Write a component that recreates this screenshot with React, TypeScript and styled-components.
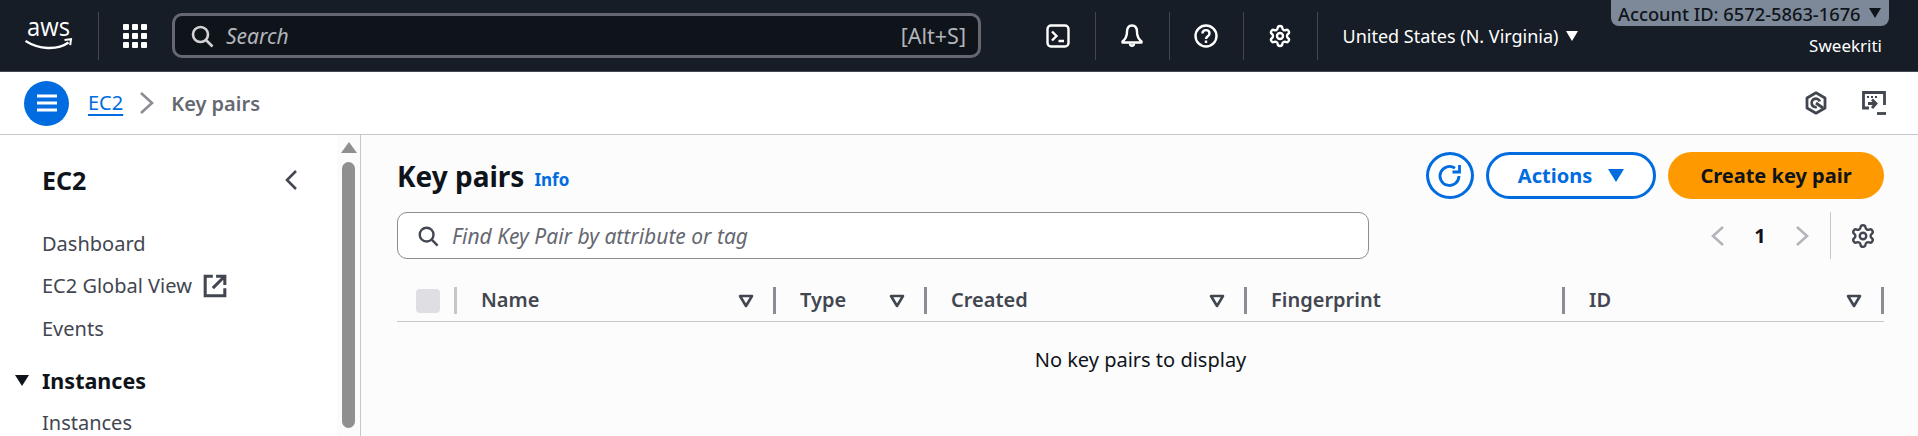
import React from "react";
import styled, { createGlobalStyle } from "styled-components";
import { Settings } from "lucide-react";

const GlobalStyle = createGlobalStyle`
    html, body { margin: 0; padding: 0; background: #fff; }
    body { font-family: "Noto Sans", "Open Sans", sans-serif; width: 1918px; height: 436px; overflow: hidden; }
    * { box-sizing: border-box; }
`

const Page = styled.div`
    width: 1918px;
    height: 436px;
    display: flex;
    flex-direction: column;
    overflow: hidden;
`

const TopBar = styled.header`
    height: 72px;
    flex: none;
    display: flex;
    align-items: center;
    padding-left: 25px;
    background: #161d26;
    border-bottom: 1px solid #424650;
    color: #fff;
`

const Logo = styled.svg`
    width: 48px;
    height: 60px;
    flex: none;
`

const TopDivider = styled.span`
    width: 1px;
    height: 48px;
    flex: none;
    background: #424650;
`

const LogoDivider = styled(TopDivider)`
    margin: 0 24px 0 25px;
`

const TopIcon = styled.svg`
    width: 24px;
    height: 24px;
    flex: none;
    color: #fff;
    display: block;
`

const TopGear = styled(Settings)`
    width: 24px;
    height: 24px;
    flex: none;
    color: #fff;
    display: block;
`

const SearchBox = styled.div`
    width: 809px;
    height: 45px;
    margin-left: 25px;
    flex: none;
    display: flex;
    align-items: center;
    padding: 0 12px 0 15px;
    background: #0f141a;
    border: 3px solid #656871;
    border-radius: 10px;
    color: #b4b4bb;
    font-size: 21px;
`

const SearchHint = styled.span`
    margin-left: 12px;
    font-style: italic;
    flex: 1;
`

const ShortcutHint = styled.span`
    font-size: 21.5px;
`

const IconGroup = styled.div`
    margin-left: 65px;
    display: flex;
    align-items: center;
    gap: 24.5px;
`

const Region = styled.div`
    margin-left: 25px;
    display: flex;
    align-items: center;
    gap: 7px;
    font-size: 18px;
    color: #fff;
`

const Caret = styled.span<{ $size: number; $color: string }>`
    display: inline-block;
    flex: none;
    width: 0;
    height: 0;
    border-left: ${(p) => p.$size}px solid transparent;
    border-right: ${(p) => p.$size}px solid transparent;
    border-top: ${(p) => Math.round(p.$size * 1.6)}px solid ${(p) => p.$color};
`

const AccountColumn = styled.div`
    margin-left: auto;
    margin-right: 29px;
    align-self: flex-start;
    display: flex;
    flex-direction: column;
    align-items: flex-end;
`

const AccountBadge = styled.div`
    width: 278px;
    height: 26px;
    display: flex;
    align-items: center;
    justify-content: space-between;
    padding: 0 8px 0 7px;
    background: #7d8998;
    border-radius: 0 0 8px 8px;
    color: #0f141a;
    font-size: 18.3px;
    font-weight: 500;
    white-space: nowrap;
`

const UserName = styled.div`
    margin: 9px 7px 0 0;
    font-size: 17px;
    line-height: 22px;
    color: #fff;
`

const CrumbBar = styled.div`
    height: 63px;
    flex: none;
    display: flex;
    align-items: center;
    padding: 0 32px 0 24px;
    background: #fff;
    border-bottom: 1px solid #c6c6cd;
`

const MenuButton = styled.button`
    width: 45px;
    height: 45px;
    padding: 0;
    flex: none;
    display: flex;
    align-items: center;
    justify-content: center;
    border: 0;
    border-radius: 50%;
    background: #006ce0;
`

const CrumbLink = styled.a`
    margin-left: 19px;
    font-size: 20px;
    line-height: 24px;
    color: #006ce0;
    text-decoration: underline;
    text-decoration-thickness: 2px;
    text-underline-offset: 4px;
`

const CrumbChevron = styled.svg`
    width: 24px;
    height: 24px;
    margin: 0 13px 0 11px;
    flex: none;
    color: #8c8c94;
`

const CrumbCurrent = styled.span`
    font-size: 20px;
    font-weight: 600;
    color: #656871;
`

const CrumbTools = styled.div`
    margin-left: auto;
    display: flex;
    align-items: center;
    gap: 34px;
    color: #424650;
`

const Body = styled.div`
    flex: 1;
    min-height: 0;
    display: flex;
`

const Sidebar = styled.aside`
    width: 361px;
    flex: none;
    display: flex;
    background: #fff;
    border-right: 1px solid #c6c6cd;
    overflow: hidden;
`

const SideContent = styled.nav`
    width: 337px;
    flex: none;
    padding: 30px 39px 0 15px;
`

const SideTitleRow = styled.div`
    display: flex;
    align-items: center;
    justify-content: space-between;
    height: 30px;
    margin-left: 27px;
`

const SideTitle = styled.div`
    font-size: 25px;
    font-weight: 700;
    color: #0f141a;
`

const SideItem = styled.a`
    display: flex;
    align-items: center;
    gap: 11px;
    margin-left: 27px;
    height: 42.5px;
    font-size: 20px;
    color: #424650;
`

const SideItems = styled.div`
    margin-top: 27px;
`

const SideSection = styled.div`
    margin-top: 10px;
    height: 42px;
    display: flex;
    align-items: center;
    gap: 13px;
    font-size: 21.5px;
    font-weight: 700;
    color: #0f141a;
`

const ScrollTrack = styled.div`
    width: 23px;
    flex: none;
    display: flex;
    flex-direction: column;
    align-items: center;
    padding: 7px 0 0 0;
    background: #fbfbfb;
`

const ScrollUp = styled.span`
    width: 0;
    height: 0;
    border-left: 8px solid transparent;
    border-right: 8px solid transparent;
    border-bottom: 11px solid #8f8f8f;
`

const ScrollThumb = styled.div`
    width: 13px;
    height: 266px;
    margin-top: 9px;
    border-radius: 7px;
    background: #8f8f8f;
`

const Main = styled.main`
    flex: 1;
    min-width: 0;
    padding: 17px 34px 0 36px;
    background: #fcfcfc;
`

const HeadRow = styled.div`
    display: flex;
    align-items: center;
    height: 47px;
`

const PageTitle = styled.h1`
    margin: 0;
    font-size: 28px;
    font-weight: 700;
    color: #0f141a;
`

const InfoLink = styled.a`
    margin: 7px 0 0 10px;
    font-size: 17px;
    font-weight: 700;
    color: #006ce0;
`

const Actions = styled.div`
    margin-left: auto;
    display: flex;
    align-items: center;
    gap: 12px;
`

const RefreshButton = styled.button`
    width: 48px;
    height: 47px;
    padding: 0;
    display: flex;
    align-items: center;
    justify-content: center;
    background: #fff;
    border: 3px solid #006ce0;
    border-radius: 50%;
    color: #006ce0;
`

const PillButton = styled.button<{ $primary?: boolean; $width: number }>`
    width: ${(p) => p.$width}px;
    height: 47px;
    padding: 0;
    display: flex;
    align-items: center;
    justify-content: center;
    gap: 16px;
    font-family: inherit;
    font-size: 20px;
    font-weight: 700;
    border-radius: 24px;
    background: ${(p) => (p.$primary ? "#ff9900" : "#fff")};
    border: ${(p) => (p.$primary ? "0" : "3px solid #006ce0")};
    color: ${(p) => (p.$primary ? "#0f141a" : "#006ce0")};
`

const FilterRow = styled.div`
    display: flex;
    align-items: center;
    margin-top: 13px;
    height: 47px;
`

const FilterBox = styled.div`
    width: 972px;
    height: 47px;
    display: flex;
    align-items: center;
    gap: 13px;
    padding-left: 19px;
    background: #fff;
    border: 1px solid #8c8c94;
    border-radius: 10px;
    font-size: 21px;
    font-style: italic;
    color: #656871;
`

const Pager = styled.div`
    margin-left: auto;
    display: flex;
    align-items: center;
    height: 47px;
    font-size: 20px;
    font-weight: 700;
    color: #0f141a;
`

const PagerChevron = styled.svg`
    width: 24px;
    height: 24px;
    flex: none;
    color: #b4b4bb;
`

const PageNumber = styled.span`
    width: 60px;
    text-align: center;
`

const PagerDivider = styled.span`
    width: 1px;
    height: 47px;
    margin: 0 19px 0 16px;
    background: #c6c6cd;
`

const PagerGear = styled(Settings)`
    width: 26px;
    height: 26px;
    margin-right: 8px;
    color: #424650;
`

const TableHead = styled.div`
    margin-top: 28px;
    height: 35px;
    display: grid;
    grid-template-columns: 60px 319px 151px 320px 318px 319px;
    align-items: start;
    border-bottom: 1px solid #c6c6cd;
`

const CheckCell = styled.div`
    height: 27px;
    display: flex;
    align-items: center;
    justify-content: space-between;
    padding-left: 19px;
    border-right: 3px solid #c6c6cd;
`

const CheckBox = styled.span`
    width: 24px;
    height: 24px;
    border-radius: 4px;
    background: #dedee3;
`

const HeadCell = styled.div`
    height: 27px;
    display: flex;
    align-items: center;
    justify-content: space-between;
    padding: 0 19px 2px 24px;
    border-right: 3px solid #8c8c94;
    font-size: 20px;
    font-weight: 600;
    color: #424650;
`

const SortIcon = styled.svg`
    width: 16px;
    height: 16px;
    flex: none;
    margin-top: 2px;
    color: #424650;
`

const EmptyText = styled.div`
    padding-top: 24px;
    text-align: center;
    font-size: 20px;
    color: #0f141a;
`

const columns = [
    { label: "Name", sortable: true },
    { label: "Type", sortable: true },
    { label: "Created", sortable: true },
    { label: "Fingerprint", sortable: false },
    { label: "ID", sortable: true },
];

const SearchPath = () => (
    <g fill="none" stroke="currentColor" strokeWidth="2.6">
        <circle cx="10.5" cy="10.5" r="7.5" />
        <path d="M16 16l6.5 6.5" />
    </g>
);

function App() {
    return (
        <Page>
            <GlobalStyle />
            <TopBar>
                <Logo viewBox="0 -8 48 60">
                    <text x="2" y="21.5" textLength="43" lengthAdjust="spacingAndGlyphs" fill="#fff" fontFamily="'Open Sans', sans-serif" fontSize="26">aws</text>
                    <path d="M.5 27c13 8.5 32 9.500 43 1.500" fill="none" stroke="#fff" strokeWidth="2.4" />
                    <path d="M39.500 26l6.500-.8-.8 6" fill="none" stroke="#fff" strokeWidth="2" />
                </Logo>
                <LogoDivider />
                <TopIcon viewBox="0 0 24 24">
                    {[0, 9, 18].flatMap((y) =>
                        [0, 9, 18].map((x) => <rect key={`${x}-${y}`} x={x} y={y} width="6" height="6" rx="1" fill="currentColor" />)
                    )}
                </TopIcon>
                <SearchBox>
                    <TopIcon viewBox="0 0 24 24" style={{ color: "#d1d1d6" }}>
                        <SearchPath />
                    </TopIcon>
                    <SearchHint>Search</SearchHint>
                    <ShortcutHint>[Alt+S]</ShortcutHint>
                </SearchBox>
                <IconGroup>
                    <TopIcon viewBox="0 0 24 24" fill="none" stroke="currentColor" strokeWidth="2.4">
                        <rect x="1.5" y="1.5" width="21" height="21" rx="3.5" />
                        <path d="M6 7.5l4.500 4.500L6 16.500M12.500 17H18" />
                    </TopIcon>
                    <TopDivider />
                    <TopIcon viewBox="0 0 24 24" fill="none" stroke="currentColor" strokeWidth="2.4" strokeLinejoin="round">
                        <path d="M12 1.500c-3.500 0-5 2.500-5 6.500 0 5-1.500 7-4.500 9.500v1h19v-1c-3-2.500-4.500-4.500-4.500-9.500 0-4-1.500-6.500-5-6.500z" />
                        <path d="M10 19.500c0 3 4 3 4 0" />
                    </TopIcon>
                    <TopDivider />
                    <TopIcon viewBox="0 0 24 24" fill="none" stroke="currentColor" strokeWidth="2.4">
                        <circle cx="12" cy="12" r="10.5" />
                        <path d="M8.500 9.500c0-4.500 7-4.500 7 0 0 3-3.500 2.500-3.500 5.500" />
                        <path d="M12 16.500v2.500" />
                    </TopIcon>
                    <TopDivider />
                    <TopGear strokeWidth={2.4} />
                    <TopDivider />
                </IconGroup>
                <Region>
                    <span>United States (N. Virginia)</span>
                    <Caret $size={6} $color="#fff" />
                </Region>
                <AccountColumn>
                    <AccountBadge>
                        <span>Account ID: 6572-5863-1676</span>
                        <Caret $size={6} $color="#0f141a" />
                    </AccountBadge>
                    <UserName>Sweekriti</UserName>
                </AccountColumn>
            </TopBar>
            <CrumbBar>
                <MenuButton aria-label="Menu">
                    <svg width="24" height="24" viewBox="0 0 24 24" stroke="#fff" strokeWidth="3">
                        <path d="M2 5h20M2 12h20M2 19h20" />
                    </svg>
                </MenuButton>
                <CrumbLink>EC2</CrumbLink>
                <CrumbChevron viewBox="0 0 24 24" fill="none" stroke="currentColor" strokeWidth="2.6">
                    <path d="M7 2l11 10-11 10" />
                </CrumbChevron>
                <CrumbCurrent>Key pairs</CrumbCurrent>
                <CrumbTools>
                    <svg width="24" height="24" viewBox="0 0 24 24" fill="none" stroke="currentColor" strokeWidth="2.8" strokeLinejoin="round">
                        <path d="M12 1.800l9 5.200v10l-9 5.200L3 17V7z" />
                        <path d="M15.800 10.500a4.200 4.200 0 1 0-3 5.500" />
                        <path d="M12 12l7 5" />
                    </svg>
                    <svg width="24" height="24" viewBox="0 0 24 24" fill="none" stroke="currentColor" strokeWidth="2.8">
                        <path d="M7 17H1.500V1.500h21V14" />
                        <path d="M5 6h2M9 6h2M13 6h2" strokeWidth="2" />
                        <path d="M6 12.500h7M10 8.500l4 4-4 4.500" />
                        <path d="M15 22.500h9" />
                    </svg>
                </CrumbTools>
            </CrumbBar>
            <Body>
                <Sidebar>
                    <SideContent>
                        <SideTitleRow>
                            <SideTitle>EC2</SideTitle>
                            <svg width="14" height="22" viewBox="0 0 14 22" fill="none" stroke="#424650" strokeWidth="2.6">
                                <path d="M12 2L3 11l9 9" />
                            </svg>
                        </SideTitleRow>
                        <SideItems>
                            <SideItem>Dashboard</SideItem>
                            <SideItem>
                                EC2 Global View
                                <svg width="24" height="24" viewBox="0 0 22 22" fill="none" stroke="#424650" strokeWidth="2.8">
                                    <path d="M9 2H2v18h18v-7" />
                                    <path d="M9 13l10-10M12 2h8v8" />
                                </svg>
                            </SideItem>
                            <SideItem>Events</SideItem>
                        </SideItems>
                        <SideSection>
                            <Caret $size={7} $color="#0f141a" />
                            Instances
                        </SideSection>
                        <SideItem>Instances</SideItem>
                    </SideContent>
                    <ScrollTrack>
                        <ScrollUp />
                        <ScrollThumb />
                    </ScrollTrack>
                </Sidebar>
                <Main>
                    <HeadRow>
                        <PageTitle>Key pairs</PageTitle>
                        <InfoLink>Info</InfoLink>
                        <Actions>
                            <RefreshButton aria-label="Refresh">
                                <svg width="26" height="26" viewBox="0 0 26 26" fill="none" stroke="currentColor" strokeWidth="2.8">
                                    <path d="M22 13a9.500 9.500 0 1 1-4-7.800" />
                                    <path d="M22.500 2v7h-7" />
                                </svg>
                            </RefreshButton>
                            <PillButton $width={170}>
                                Actions
                                <Caret $size={8} $color="#006ce0" />
                            </PillButton>
                            <PillButton $primary $width={216}>Create key pair</PillButton>
                        </Actions>
                    </HeadRow>
                    <FilterRow>
                        <FilterBox>
                            <svg width="22" height="22" viewBox="0 0 24 24" color="#424650">
                                <SearchPath />
                            </svg>
                            Find Key Pair by attribute or tag
                        </FilterBox>
                        <Pager>
                            <PagerChevron viewBox="0 0 24 24" fill="none" stroke="currentColor" strokeWidth="2.6">
                                <path d="M17 3L7 12l10 9" />
                            </PagerChevron>
                            <PageNumber>1</PageNumber>
                            <PagerChevron viewBox="0 0 24 24" fill="none" stroke="currentColor" strokeWidth="2.6">
                                <path d="M7 3l10 9-10 9" />
                            </PagerChevron>
                            <PagerDivider />
                            <PagerGear strokeWidth={2.2} />
                        </Pager>
                    </FilterRow>
                    <TableHead>
                        <CheckCell>
                            <CheckBox />
                        </CheckCell>
                        {columns.map((col) => (
                            <HeadCell key={col.label}>
                                {col.label}
                                {col.sortable && (
                                    <SortIcon viewBox="0 0 16 16" fill="none" stroke="currentColor" strokeWidth="2.6" strokeLinejoin="round">
                                        <path d="M2 3h12l-6 10z" />
                                    </SortIcon>
                                )}
                            </HeadCell>
                        ))}
                    </TableHead>
                    <EmptyText>No key pairs to display</EmptyText>
                </Main>
            </Body>
        </Page>
    );
}

export default App;
